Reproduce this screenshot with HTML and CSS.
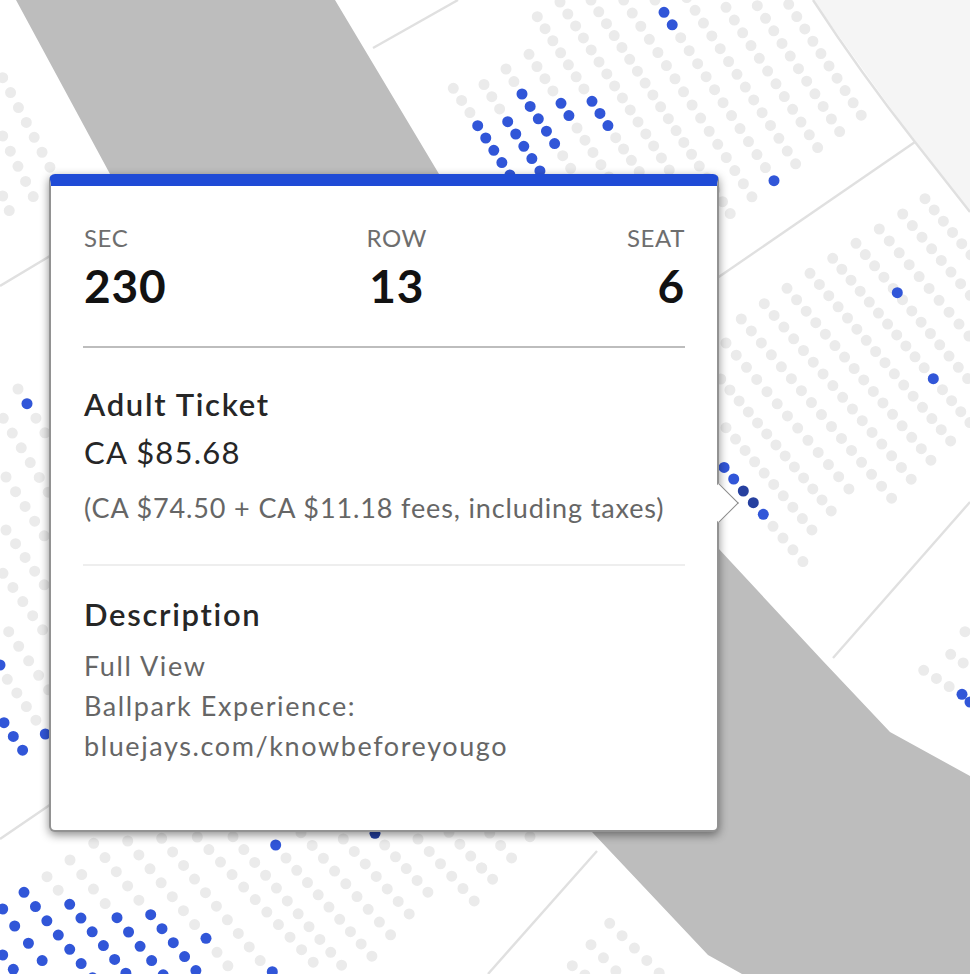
FILE: index.html
```html
<!DOCTYPE html>
<html lang="en">
<head>
<meta charset="utf-8">
<title>Seat details</title>
<link rel="stylesheet" href="styles.css">
</head>
<body>
<main class="stage">
  <svg class="seat-map" viewBox="0 0 970 974" width="970" height="974" aria-hidden="true">
    <polygon class="outer" points="813,0 915,142 970,212 970,0"/>
    <polygon class="field" points="16,0 335,0 439,174 718,548 822,660 890,732 970,776 970,974 742,974 708,955 592,832 300,600 110,174"/>
    <g class="aisles">
      <line x1="373" y1="48" x2="458" y2="0"/>
      <line x1="0" y1="286" x2="60" y2="250"/>
      <line x1="710" y1="283" x2="915" y2="142"/>
      <path d="M813 0 Q860 72 915 142 L970 212"/>
      <line x1="833" y1="658" x2="970" y2="502"/>
      <line x1="597" y1="851" x2="488" y2="974"/>
      <line x1="0" y1="839" x2="60" y2="798"/>
    </g>
    <g class="dots">
      <line x1="453.3" y1="88.3" x2="470" y2="112.7" pathLength="2.01"/>
      <line x1="484" y1="84.5" x2="499.7" y2="109" pathLength="2.01"/>
      <line x1="506" y1="69" x2="514" y2="81.7" pathLength="1.01"/>
      <line x1="562.7" y1="155.7" x2="578.7" y2="181" pathLength="2.01"/>
      <line x1="529" y1="54.3" x2="553" y2="91" pathLength="3.01"/>
      <line x1="577" y1="128" x2="609" y2="177" pathLength="4.01"/>
      <line x1="537.3" y1="16.7" x2="584" y2="89" pathLength="6.01"/>
      <line x1="615.7" y1="137.7" x2="639.3" y2="171.7" pathLength="3.01"/>
      <line x1="560" y1="2" x2="669.3" y2="170" pathLength="14.01"/>
      <line x1="591" y1="0" x2="730.3" y2="213.7" pathLength="18.01"/>
      <line x1="623.7" y1="0" x2="752" y2="197" pathLength="15.01"/>
      <line x1="655" y1="0" x2="655" y2="0.1" pathLength="1"/>
      <line x1="680.7" y1="37.7" x2="765.5" y2="167.7" pathLength="10.01"/>
      <line x1="686.7" y1="-2.5" x2="795.7" y2="164" pathLength="13.01"/>
      <line x1="726" y1="7.3" x2="817.7" y2="147.7" pathLength="11.01"/>
      <line x1="757.3" y1="5.7" x2="839.7" y2="131.7" pathLength="10.01"/>
      <line x1="788.7" y1="4.3" x2="861.3" y2="115.3" pathLength="9.01"/>

      <line x1="741.3" y1="319" x2="891.7" y2="498.3" pathLength="15.01"/>
      <line x1="764.3" y1="303.7" x2="911.3" y2="479.3" pathLength="15.01"/>
      <line x1="787" y1="288.3" x2="931" y2="460.3" pathLength="15.01"/>
      <line x1="810" y1="273.3" x2="950.7" y2="441" pathLength="15.01"/>
      <line x1="832.7" y1="258.3" x2="970" y2="422.7" pathLength="15.01"/>
      <line x1="856" y1="243.3" x2="977" y2="390" pathLength="13.01"/>
      <line x1="879.3" y1="229" x2="979" y2="348" pathLength="10.01"/>
      <line x1="902.7" y1="214" x2="980" y2="307" pathLength="8.01"/>
      <line x1="925" y1="198.7" x2="971" y2="255" pathLength="5.01"/>
      <line x1="726" y1="343" x2="849" y2="489" pathLength="12.01"/>
      <line x1="720.7" y1="379" x2="831.3" y2="511" pathLength="12.01"/>
      <line x1="726" y1="427.7" x2="812" y2="530" pathLength="9.01"/>
      <line x1="773" y1="526.3" x2="803" y2="561.7" pathLength="3.01"/>

      <line x1="923.7" y1="670.3" x2="949.3" y2="686.7" pathLength="2.01"/>
      <line x1="950.7" y1="654.3" x2="963.3" y2="663" pathLength="1.01"/>
      <line x1="965" y1="631.7" x2="965" y2="631.8" pathLength="1"/>

      <line x1="2.7" y1="77.7" x2="50" y2="167.3" pathLength="6.01"/>
      <line x1="2.7" y1="136" x2="33.3" y2="196.7" pathLength="4.01"/>
      <line x1="2.7" y1="196" x2="9.3" y2="210.7" pathLength="1.01"/>
      <line x1="18" y1="389" x2="45" y2="433" pathLength="3.01"/>
      <line x1="3.3" y1="418.3" x2="48.3" y2="492.3" pathLength="5.01"/>
      <line x1="6" y1="477" x2="44.3" y2="536" pathLength="4.01"/>
      <line x1="6" y1="530" x2="44.3" y2="585" pathLength="4.01"/>
      <line x1="3" y1="573.3" x2="42.7" y2="630" pathLength="4.01"/>
      <line x1="8.7" y1="631.7" x2="48.7" y2="690" pathLength="4.01"/>
      <line x1="7.3" y1="679.3" x2="36" y2="720.3" pathLength="3.01"/>
      <line x1="47" y1="876.7" x2="58.3" y2="890.3" pathLength="1.01"/>
      <line x1="70" y1="860" x2="105.3" y2="903.7" pathLength="3.01"/>
      <line x1="93.7" y1="843.3" x2="139" y2="900.3" pathLength="4.01"/>
      <line x1="127.7" y1="841" x2="194.7" y2="924.7" pathLength="6.01"/>
      <line x1="217" y1="952.3" x2="228" y2="966" pathLength="1.01"/>
      <line x1="161.7" y1="838.3" x2="260.3" y2="960.7" pathLength="9.01"/>
      <line x1="197.3" y1="837" x2="313.3" y2="962.3" pathLength="10.01"/>
      <line x1="233" y1="836.7" x2="341.7" y2="965.3" pathLength="10.01"/>
      <line x1="286" y1="858" x2="372" y2="956.3" pathLength="8.01"/>
      <line x1="301" y1="832.7" x2="390.7" y2="935" pathLength="8.01"/>
      <line x1="343.3" y1="839" x2="409.3" y2="914" pathLength="6.01"/>
      <line x1="384.7" y1="845" x2="428" y2="892.3" pathLength="4.01"/>
      <line x1="418" y1="839" x2="474.3" y2="901" pathLength="5.01"/>
      <line x1="449" y1="832.3" x2="481.7" y2="868" pathLength="3.01"/>
      <line x1="481.7" y1="868" x2="492.7" y2="879.3" pathLength="1.01"/>
      <line x1="489.7" y1="833" x2="511.7" y2="858" pathLength="2.01"/>
      <line x1="530" y1="836.7" x2="530" y2="836.8" pathLength="1"/>
      <line x1="609.7" y1="923.3" x2="659.3" y2="973" pathLength="4.01"/>
      <line x1="591" y1="944.7" x2="616" y2="971" pathLength="2.01"/>
      <line x1="572.3" y1="965.7" x2="585" y2="975" pathLength="1.01"/>
    </g>
    <g class="dots open">
      <line x1="477.7" y1="125.7" x2="510" y2="175" pathLength="4.01"/>
      <line x1="507.7" y1="121.7" x2="540" y2="171" pathLength="4.01"/>
      <line x1="522" y1="94" x2="554.7" y2="143.7" pathLength="4.01"/>
      <line x1="561" y1="103.3" x2="569" y2="115.7" pathLength="1.01"/>
      <line x1="592" y1="101.3" x2="608" y2="125.7" pathLength="2.01"/>
      <line x1="664" y1="12.3" x2="672.3" y2="25" pathLength="1.01"/>
      <line x1="733.7" y1="479" x2="724" y2="467.3" pathLength="1.01"/>
      <line x1="24" y1="892.3" x2="92.7" y2="978" pathLength="6.01"/>
      <line x1="69.7" y1="904.3" x2="126" y2="973.3" pathLength="5.01"/>
      <line x1="117" y1="917.7" x2="163.3" y2="975" pathLength="4.01"/>
      <line x1="150.7" y1="914.7" x2="196" y2="970.7" pathLength="4.01"/>
      <line x1="14.7" y1="926" x2="42.3" y2="960.7" pathLength="2.01"/>
      <line x1="4" y1="722.7" x2="22.7" y2="750.3" pathLength="2.01"/>
    </g>
    <g class="seats">
      <circle cx="774" cy="180.7" r="5.5"/>
      <circle cx="897.3" cy="292.7" r="5.5"/>
      <circle cx="933.3" cy="378.7" r="5.5"/>
      <circle cx="763.3" cy="514.3" r="5.5"/>
      <circle cx="962" cy="694.3" r="5.5"/>
      <circle cx="970" cy="702" r="5.5"/>
      <circle cx="27" cy="403.7" r="5.5"/>
      <circle cx="0" cy="665" r="5.5"/>
      <circle cx="45.3" cy="734" r="5.5"/>
      <circle cx="2.7" cy="909" r="5.5"/>
      <circle cx="2.7" cy="955" r="5.5"/>
      <circle cx="13.3" cy="969.3" r="5.5"/>
      <circle cx="206" cy="938.3" r="5.5"/>
      <circle cx="272.3" cy="971.7" r="5.5"/>
      <circle cx="275.7" cy="845" r="5.5"/>
      <circle class="held" cx="743.3" cy="491" r="5.5"/>
      <circle class="held" cx="753.3" cy="502.7" r="5.5"/>
      <circle class="held" cx="375" cy="833.3" r="5.5"/>
    </g>
  </svg>

  <article class="ticket-card">
    <span class="pointer"></span>
    <div class="seat-row">
      <div class="seat-col">
        <span class="seat-label">SEC</span>
        <strong class="seat-value">230</strong>
      </div>
      <div class="seat-col seat-col-center">
        <span class="seat-label">ROW</span>
        <strong class="seat-value">13</strong>
      </div>
      <div class="seat-col seat-col-end">
        <span class="seat-label">SEAT</span>
        <strong class="seat-value">6</strong>
      </div>
    </div>
    <section class="ticket-price">
      <h3 class="section-title">Adult Ticket</h3>
      <p class="price">CA $85.68</p>
      <p class="fees">(CA $74.50 + CA $11.18 fees, including taxes)</p>
    </section>
    <section class="ticket-desc">
      <h3 class="section-title">Description</h3>
      <p class="desc-line">Full View</p>
      <p class="desc-line">Ballpark Experience:</p>
      <p class="desc-line">bluejays.com/knowbeforeyougo</p>
    </section>
  </article>
</main>
</body>
</html>
```

FILE: styles.css
```css
* { box-sizing: border-box; }
html, body { margin: 0; padding: 0; background: #fff; }
.stage {
  position: relative;
  width: 970px;
  height: 974px;
  overflow: hidden;
  font-family: "Lato", "Open Sans", sans-serif;
}
.seat-map { position: absolute; left: 0; top: 0; display: block; }
.outer { fill: #f5f5f5; }
.field { fill: #bdbdbd; }
.aisles line, .aisles path { stroke: #e0e0e0; stroke-width: 2.4; fill: none; }
.dots line {
  stroke: #ebebeb;
  stroke-width: 11;
  stroke-linecap: round;
  stroke-dasharray: 0 1;
}
.dots.open line { stroke: #3156d8; }
.seats circle { fill: #3156d8; }
.seats .held { fill: #26409f; }

.ticket-card {
  position: absolute;
  left: 49px;
  top: 174px;
  width: 670px;
  height: 658px;
  padding: 0 32px;
  background: #fff;
  border: 2px solid #929292;
  border-top: 12px solid #1f4bd6;
  border-radius: 6px;
  box-shadow: 0 3px 10px rgba(0, 0, 0, .45);
}
.pointer {
  position: absolute;
  right: -16px;
  top: 303px;
  width: 28px;
  height: 28px;
  background: #fff;
  border-top: 1px solid #8a8a8a;
  border-right: 1px solid #8a8a8a;
  transform: rotate(45deg);
}
.seat-row {
  display: flex;
  justify-content: space-between;
  padding-top: 38px;
  padding-bottom: 32px;
  border-bottom: 2px solid #bdbdbd;
}
.seat-col { display: flex; flex-direction: column; align-items: flex-start; padding-left: 1px; }
.seat-col-center { align-items: center; padding-left: 0; }
.seat-col-end { align-items: flex-end; padding-left: 0; }
.seat-label {
  font-size: 24px;
  line-height: 28px;
  color: #6e6e6e;
  letter-spacing: 0.6px;
}
.seat-value {
  margin-top: 6px;
  font-size: 46px;
  line-height: 56px;
  font-weight: 700;
  color: #121212;
  letter-spacing: 0.8px;
}
.ticket-price {
  padding: 36px 0 36px 1px;
  border-bottom: 2px solid #eee;
}
.ticket-desc { padding: 28px 0 0 1px; }
.section-title {
  margin: 0;
  font-size: 31px;
  line-height: 40px;
  font-weight: 600;
  color: #262626;
  letter-spacing: 1.7px;
}
.price {
  margin: 8px 0 0;
  font-size: 31px;
  line-height: 40px;
  color: #262626;
  letter-spacing: 1.2px;
}
.fees {
  margin: 16px 0 0;
  font-size: 27px;
  line-height: 40px;
  color: #666;
  letter-spacing: 0.87px;
}
.desc-line {
  margin: 0;
  font-size: 27px;
  line-height: 40px;
  color: #666;
  letter-spacing: 1.6px;
}
.ticket-desc .section-title { margin-bottom: 12px; }
```
